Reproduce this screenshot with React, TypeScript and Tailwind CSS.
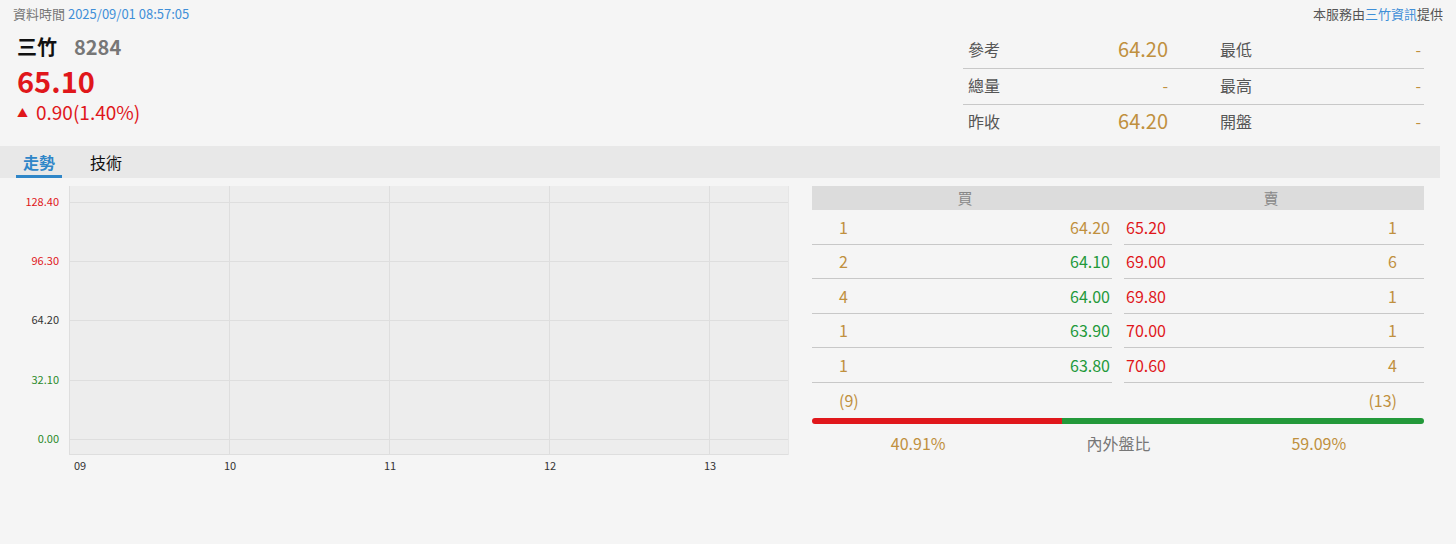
import React from 'react'

const font = { fontFamily: '"Noto Sans CJK TC", "Noto Sans", sans-serif' }

const gold = 'text-[#c0903e]'
const red = 'text-[#e0171b]'
const green = 'text-[#23993a]'

const stats = [
  { l1: '參考', v1: '64.20', l2: '最低', v2: '-' },
  { l1: '總量', v1: '-', l2: '最高', v2: '-' },
  { l1: '昨收', v1: '64.20', l2: '開盤', v2: '-' },
]

const bids = [
  { q: '1', p: '64.20', c: gold },
  { q: '2', p: '64.10', c: green },
  { q: '4', p: '64.00', c: green },
  { q: '1', p: '63.90', c: green },
  { q: '1', p: '63.80', c: green },
]
const asks = [
  { p: '65.20', q: '1' },
  { p: '69.00', q: '6' },
  { p: '69.80', q: '1' },
  { p: '70.00', q: '1' },
  { p: '70.60', q: '4' },
]

const yLabels = [
  { t: '128.40', y: 16, c: 'text-[#e0171b]' },
  { t: '96.30', y: 75, c: 'text-[#e0171b]' },
  { t: '64.20', y: 134, c: 'text-[#333]' },
  { t: '32.10', y: 194, c: 'text-[#2b8a2b]' },
  { t: '0.00', y: 253, c: 'text-[#2b8a2b]' },
]

function Chart() {
  return (
    <div className="flex flex-col">
      <div className="flex">
        <div className="relative w-[69px] h-[269px] text-[11px]">
          {yLabels.map(l => (
            <span key={l.t} className={`absolute right-[10px] leading-none ${l.c}`} style={{ top: l.y - 6 }}>
              {l.t}
            </span>
          ))}
        </div>
        <svg width="720" height="269" className="bg-[#ededed]">
          {[16, 75, 134, 194, 253].map(y => (
            <line key={y} x1="0" x2="720" y1={y + 0.5} y2={y + 0.5} stroke="#dedede" />
          ))}
          {[160, 320, 480, 640].map(x => (
            <line key={x} x1={x + 0.5} x2={x + 0.5} y1="0" y2="269" stroke="#dedede" />
          ))}
          <line x1="0.5" x2="0.5" y1="0" y2="269" stroke="#dedede" />
          <line x1="0" x2="720" y1="268.5" y2="268.5" stroke="#dedede" />
          <line x1="719.5" x2="719.5" y1="0" y2="269" stroke="#e6e6e6" />
        </svg>
      </div>
      <div className="relative h-[24px] ml-[69px] text-[11px] text-[#333]">
        {['09', '10', '11', '12', '13'].map((t, i) => (
          <span key={t} className="absolute top-[2px]" style={{ left: i === 0 ? 5 : i * 160 - 5 }}>
            {t}
          </span>
        ))}
      </div>
    </div>
  )
}

function OrderBook() {
  return (
    <div className="w-[612px] flex flex-col">
      <div className="flex h-[24px] bg-[#dcdcdc] text-[15px] text-[#888] leading-[24px]">
        <div className="flex-1 text-center">買</div>
        <div className="flex-1 text-center">賣</div>
      </div>
      <div className="flex gap-[12px]">
        <div className="flex-1 flex flex-col">
          {bids.map((b, i) => (
            <div key={i} className="h-[34.5px] flex items-center justify-between border-b border-[#c8c8c8] pl-[27px] pr-[2px] text-[16px]">
              <span className={gold}>{b.q}</span>
              <span className={b.c}>{b.p}</span>
            </div>
          ))}
        </div>
        <div className="flex-1 flex flex-col">
          {asks.map((a, i) => (
            <div key={i} className="h-[34.5px] flex items-center justify-between border-b border-[#c8c8c8] pl-[2px] pr-[27px] text-[16px]">
              <span className={red}>{a.p}</span>
              <span className={gold}>{a.q}</span>
            </div>
          ))}
        </div>
      </div>
      <div className={`flex justify-between px-[27px] h-[34px] items-center text-[16px] ${gold}`}>
        <span>(9)</span>
        <span>(13)</span>
      </div>
      <div className="flex h-[6px] mt-[1px] rounded-full overflow-hidden">
        <div className="bg-[#e0171b]" style={{ width: '40.91%' }} />
        <div className="bg-[#23993a] flex-1" />
      </div>
      <div className="flex h-[38px] items-center text-[16px] pl-[6px] pr-[5px]">
        <div className={`flex-1 text-center ${gold}`}>40.91%</div>
        <div className="flex-1 text-center text-[#777]">內外盤比</div>
        <div className={`flex-1 text-center ${gold}`}>59.09%</div>
      </div>
    </div>
  )
}

export default function App() {
  return (
    <div className="w-[1456px] h-[544px] bg-[#f5f5f5] overflow-hidden" style={font}>
      <div className="flex justify-between items-center h-[27px] pl-[13px] pr-[13px] text-[13px]">
        <div>
          <span className="text-[#777]">資料時間 </span>
          <span className="text-[#3f8fd8]">2025/09/01 08:57:05</span>
        </div>
        <div className="text-[#555]">
          本服務由<span className="text-[#3f8fd8]">三竹資訊</span>提供
        </div>
      </div>

      <div className="flex justify-between h-[119px] pr-[32px]">
        <div className="pl-[17px] pt-[6px]">
          <div className="flex items-baseline gap-[17px] h-[28px] leading-[28px]">
            <span className="text-[20px] font-bold text-[#111]">三竹</span>
            <span className="text-[20px] font-bold text-[#777]">8284</span>
          </div>
          <div className={`text-[29px] font-bold leading-[38px] ${red}`}>65.10</div>
          <div className={`flex items-center gap-[8px] text-[19px] leading-[26px] ${red}`}>
            <span className="text-[11px]">▲</span>
            <span>0.90(1.40%)</span>
          </div>
        </div>
        <div className="w-[461px] pt-[6px]">
          {stats.map((s, i) => (
            <div key={i} className={`flex h-[36px] items-center pb-[4px] ${i < 2 ? 'border-b border-[#c8c8c8]' : ''}`}>
              <div className="w-[205px] flex justify-between items-center pl-[5px]">
                <span className="text-[16px] text-[#555]">{s.l1}</span>
                <span className={s.v1 === '-' ? `text-[16px] ${gold}` : `text-[20px] ${gold}`}>{s.v1}</span>
              </div>
              <div className="flex-1 flex justify-between items-center pl-[52px] pr-[3px]">
                <span className="text-[16px] text-[#555]">{s.l2}</span>
                <span className={`text-[16px] ${gold}`}>{s.v2}</span>
              </div>
            </div>
          ))}
        </div>
      </div>

      <div className="flex w-[1440px] h-[32px] bg-[#e8e8e8] pl-[16px] gap-[28px] text-[16px]">
        <div className="relative px-[7px] flex items-center font-bold text-[#2f86c8]">
          走勢
          <div className="absolute left-0 right-0 bottom-0 h-[3px] bg-[#2f86c8]" />
        </div>
        <div className="flex items-center text-[#111]">技術</div>
      </div>

      <div className="flex gap-[23px] pt-[8px]">
        <Chart />
        <OrderBook />
      </div>
    </div>
  )
}
